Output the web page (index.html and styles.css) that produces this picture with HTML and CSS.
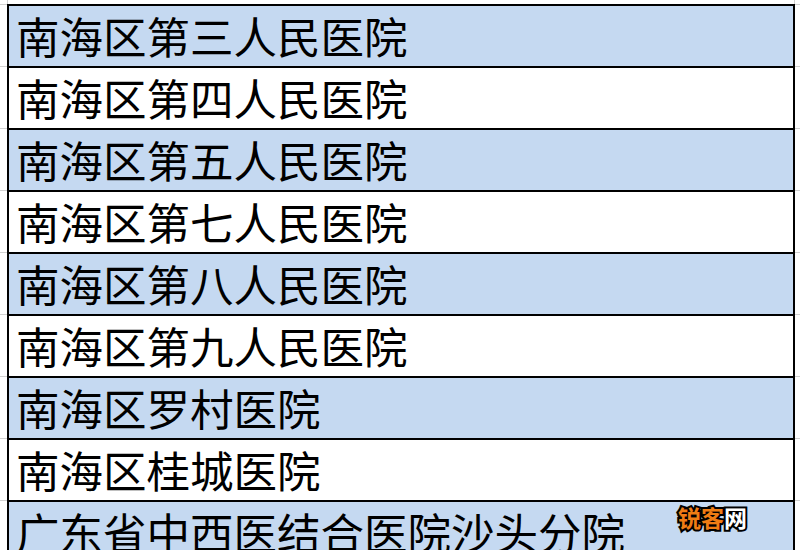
FILE: index.html
```html
<!DOCTYPE html>
<html lang="zh-CN">
<head>
<meta charset="utf-8">
<title>医院列表</title>
<link rel="stylesheet" href="styles.css">
</head>
<body>
<div class="sheet">
  <div class="gridtop"></div>
  <div class="table">
    <div class="row blue">南海区第三人民医院</div>
    <div class="row">南海区第四人民医院</div>
    <div class="row blue">南海区第五人民医院</div>
    <div class="row">南海区第七人民医院</div>
    <div class="row blue">南海区第八人民医院</div>
    <div class="row">南海区第九人民医院</div>
    <div class="row blue">南海区罗村医院</div>
    <div class="row">南海区桂城医院</div>
    <div class="row blue">广东省中西医结合医院沙头分院</div>
  </div>
  <div class="wm"><span class="wm-o">锐客</span><span class="wm-w">网</span></div>
</div>
</body>
</html>
```
FILE: styles.css
```css
html, body {
  margin: 0;
  padding: 0;
}
body {
  width: 800px;
  height: 550px;
  overflow: hidden;
  background: #fff;
}
.sheet {
  position: relative;
  width: 800px;
  height: 550px;
  overflow: hidden;
  background-image: repeating-linear-gradient(to bottom, #d0d0d0 0, #d0d0d0 1px, transparent 1px, transparent 62px);
  background-position: 0 4px;
}
.gridtop {
  height: 5px;
  margin-left: 7px;
  width: 788px;
  box-sizing: border-box;
  border-left: 1px solid #d0d0d0;
  border-right: 1px solid #d0d0d0;
  background: #fff;
  border-bottom: 1px solid #d0d0d0;
}
.table {
  margin-left: 7px;
  width: 788px;
  box-sizing: border-box;
  border-top: 2px solid #000;
  border-left: 2px solid #000;
  border-right: 2px solid #000;
  background: #fff;
  margin-top: -1px;
}
.row {
  height: 60px;
  line-height: 60px;
  border-bottom: 2px solid #000;
  padding-left: 7px;
  font-family: "Noto Sans CJK SC", "Noto Sans", sans-serif;
  font-size: 43.5px;
  color: #000;
  white-space: nowrap;
  background: #fff;
}
.row.blue {
  background: #c5d9f1;
}
.wm {
  position: absolute;
  left: 678px;
  top: 500px;
  font-family: "Noto Sans CJK SC", sans-serif;
  font-weight: 700;
  font-size: 23px;
  line-height: 34px;
  letter-spacing: 0;
  -webkit-text-stroke: 4px #000;
  paint-order: stroke fill;
}
.wm-o {
  color: #f07c14;
}
.wm-w {
  color: #fff;
}
```
